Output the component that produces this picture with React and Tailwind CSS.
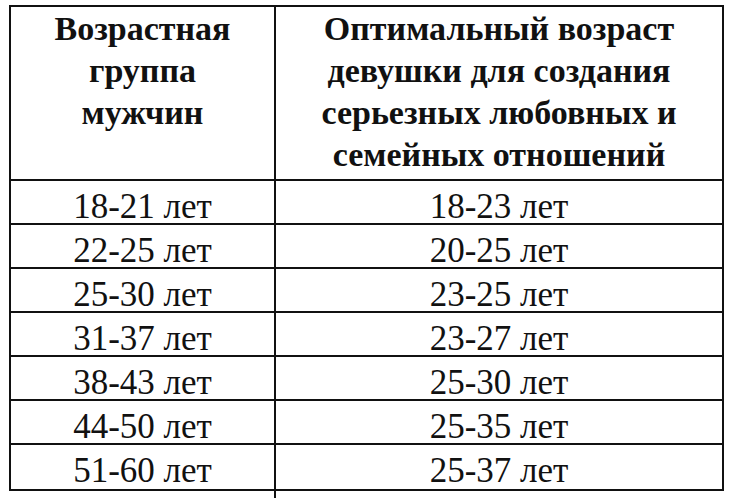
export default function App() {
  const rows = [
    ["18-21 лет", "18-23 лет"],
    ["22-25 лет", "20-25 лет"],
    ["25-30 лет", "23-25 лет"],
    ["31-37 лет", "23-27 лет"],
    ["38-43 лет", "25-30 лет"],
    ["44-50 лет", "25-35 лет"],
    ["51-60 лет", "25-37 лет"],
  ];
  return (
    <div className="w-[732px] h-[500px] bg-white pl-[9px] pt-[5px] text-[#111]">
      <div className="w-[715px] border-2 border-[#111]">
        <div className="grid grid-cols-[265px_1fr] h-[174px] border-b-2 border-[#111]">
          <div className="border-r-2 border-[#111] text-center font-['Liberation_Serif','Times_New_Roman',serif] font-bold text-[34px] leading-[42px] pt-[1px]">
            Возрастная<br />группа<br />мужчин
          </div>
          <div className="text-center font-['Liberation_Serif','Times_New_Roman',serif] font-bold text-[34px] leading-[42px] pt-[1px]">
            Оптимальный возраст<br />девушки для создания<br />серьезных любовных и<br />семейных отношений
          </div>
        </div>
        {rows.map((r, i) => (
          <div key={i} className={"grid grid-cols-[265px_1fr] h-[44px] " + (i < rows.length - 1 ? "border-b-2 border-[#111]" : "")}>
            <div className="border-r-2 border-[#111] flex items-center justify-center font-['Liberation_Serif','Times_New_Roman',serif] text-[35px]">{r[0]}</div>
            <div className="flex items-center justify-center font-['Liberation_Serif','Times_New_Roman',serif] text-[35px]">{r[1]}</div>
          </div>
        ))}
      </div>
    </div>
  );
}
